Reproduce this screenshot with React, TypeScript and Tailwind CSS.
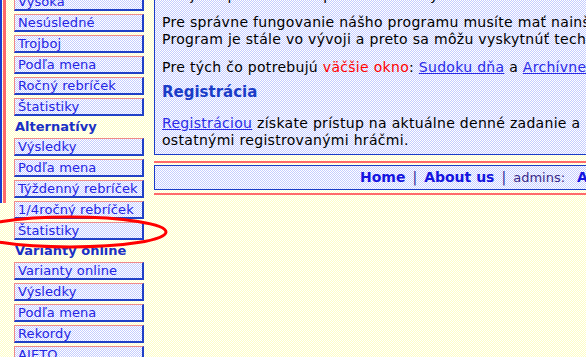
import React from "react";

const yellowBg =
  "bg-[image:repeating-conic-gradient(#ffffc4_0_25%,#ffffff_0_50%)] bg-[length:2px_2px]";
const blueBg =
  "bg-[image:repeating-conic-gradient(#c4ccff_0_25%,#ffffff_0_50%)] bg-[length:2px_2px]";

type Entry = { label: string; header?: boolean };

const menu: Entry[] = [
  { label: "Výsoka" },
  { label: "Nesúsledné" },
  { label: "Trojboj" },
  { label: "Podľa mena" },
  { label: "Ročný rebríček" },
  { label: "Štatistiky" },
  { label: "Alternatívy", header: true },
  { label: "Výsledky" },
  { label: "Podľa mena" },
  { label: "Týždenný rebríček" },
  { label: "1/4ročný rebríček" },
  { label: "Štatistiky" },
  { label: "Varianty online", header: true },
  { label: "Varianty online" },
  { label: "Výsledky" },
  { label: "Podľa mena" },
  { label: "Rekordy" },
  { label: "AJETO" },
];

function MenuItem({ label }: { label: string }) {
  return (
    <a
      className={`block h-[18px] border-t border-l border-r-2 border-b-2 border-t-[#f08a8a] border-l-[#f08a8a] border-r-[#2040c8] border-b-[#2040c8] pl-[3px] text-[13px] leading-[15px] tracking-[0.1px] text-[#2424e4] whitespace-nowrap ${blueBg}`}
    >
      {label}
    </a>
  );
}

function SideMenu() {
  return (
    <div className="ml-[8px] flex w-[130px] shrink-0 flex-col gap-[3px] pt-[13px]">
      {menu.map((m, i) =>
        m.header ? (
          <div
            key={i}
            className="pl-[1px] text-[13px] font-bold leading-[16px] text-[#1a30c4]"
          >
            {m.label}
          </div>
        ) : (
          <MenuItem key={i} label={m.label} />
        )
      )}
    </div>
  );
}

function MainBox() {
  return (
    <div
      className={`border border-[#1a3cc8] px-[7px] pt-[6px] pb-[5px] text-[14px] leading-[17px] tracking-[0.3px] text-black whitespace-nowrap ${blueBg}`}
    >
      <p>Vitajte v pravidelnom prehľade denných sudoku úloh a ich výsledkov.</p>
      <p className="mt-[10px]">
        Pre správne fungovanie nášho programu musíte mať nainštalovanú Javu.
        <br />
        Program je stále vo vývoji a preto sa môžu vyskytnúť technické problémy.
      </p>
      <p className="mt-[11px]">
        Pre tých čo potrebujú <span className="text-[#ff0000]">väčšie okno</span>:{" "}
        <a className="text-[#2a2ae8] underline">Sudoku dňa</a> a{" "}
        <a className="text-[#2a2ae8] underline">Archívne sudoku</a>
      </p>
      <h2 className="mt-[7px] text-[15px] font-bold leading-[18px] tracking-normal text-[#1a3cc8]">
        Registrácia
      </h2>
      <p className="mt-[14px]">
        <a className="text-[#2a2ae8] underline">Registráciou</a> získate prístup na
        aktuálne denné zadanie a možnosť porovnať sa s
        <br />
        ostatnými registrovanými hráčmi.
      </p>
    </div>
  );
}

function Footer() {
  return (
    <div className="mt-[6px] flex flex-col">
      <div className="h-[2px] bg-[#ff6a6a]" />
      <div
        className={`mt-[2px] flex h-[25px] items-center border-t border-b border-l border-[#1a3cc8] pl-[205px] text-[14px] leading-[17px] whitespace-nowrap ${blueBg}`}
      >
        <a className="font-bold text-[#1414e0]">Home</a>
        <span className="px-[7px] text-[#2a2a9a]">|</span>
        <a className="font-bold text-[#1414e0]">About us</a>
        <span className="px-[7px] text-[#2a2a9a]">|</span>
        <span className="text-[13px] text-[#3a2a8a]">admins:</span>
        <a className="ml-[12px] font-bold text-[#1414e0]">Andrej, Peter</a>
      </div>
      <div className="mt-[3px] h-[2px] bg-[#ff6a6a]" />
    </div>
  );
}

export default function App() {
  return (
    <div
      className={`relative h-[357px] w-[586px] overflow-hidden font-['DejaVu_Sans',sans-serif] ${yellowBg}`}
    >
      <div className="-mt-[20px] flex items-start">
        <div className="flex h-[223px] shrink-0">
          <div className="w-[2px] bg-[#1a3cd0]" />
          <div className="w-px" />
          <div className="w-[3px] bg-[#ff6a6a]" />
        </div>
        <SideMenu />
        <div className="ml-[10px] w-[780px] shrink-0">
          <MainBox />
          <Footer />
        </div>
      </div>
      <svg
        className="pointer-events-none absolute left-0 top-0"
        width="586"
        height="357"
      >
        <ellipse
          cx="70"
          cy="232"
          rx="96"
          ry="15"
          fill="none"
          stroke="#ff0000"
          strokeWidth="3"
        />
      </svg>
    </div>
  );
}
